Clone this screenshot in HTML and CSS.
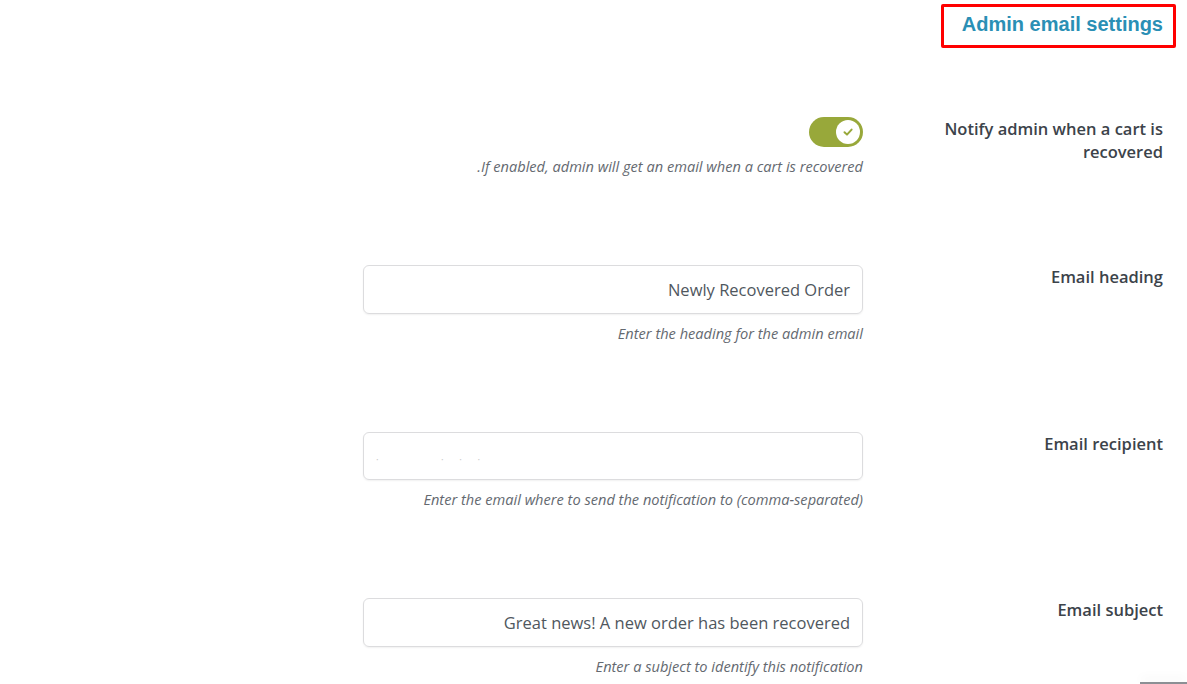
FILE: index.html
```html
<!DOCTYPE html>
<html lang="en">
<head>
  <meta charset="UTF-8">
  <meta name="viewport" content="width=device-width, initial-scale=1.0">
  <title>Admin email settings</title>
  <link rel="stylesheet" href="styles.css">
</head>
<body>
  <header class="head">
    <h2 class="head-title">Admin email settings</h2>
  </header>
  <main class="form">
    <div class="row row-first">
      <label class="label">Notify admin when a cart is recovered</label>
      <div class="field">
        <span class="toggle">
          <span class="knob">
            <svg width="12" height="12" viewBox="0 0 12 12"><path d="M2.5 6.2 L5 8.6 L9.6 3.6" fill="none" stroke="#98a83a" stroke-width="2" stroke-linecap="round" stroke-linejoin="round"/></svg>
          </span>
        </span>
        <p class="desc">.If enabled, admin will get an email when a cart is recovered</p>
      </div>
    </div>
    <div class="row">
      <label class="label">Email heading</label>
      <div class="field">
        <div class="input">Newly Recovered Order</div>
        <p class="desc">Enter the heading for the admin email</p>
      </div>
    </div>
    <div class="row row-short">
      <label class="label">Email recipient</label>
      <div class="field">
        <div class="input input-blur"><span class="dots">&middot; &nbsp;&nbsp;&nbsp;&nbsp;&nbsp;&nbsp;&nbsp;&nbsp;&nbsp;&nbsp;&nbsp;&nbsp;&nbsp;&nbsp;&nbsp;&nbsp;&nbsp;&nbsp;&nbsp;&nbsp;&nbsp;&nbsp; &middot; &nbsp;&nbsp;&nbsp;&nbsp; &middot; &nbsp;&nbsp;&nbsp;&nbsp; &middot;</span></div>
        <p class="desc">Enter the email where to send the notification to (comma-separated)</p>
      </div>
    </div>
    <div class="row row-last">
      <label class="label">Email subject</label>
      <div class="field">
        <div class="input">Great news! A new order has been recovered</div>
        <p class="desc">Enter a subject to identify this notification</p>
      </div>
    </div>
  </main>
  <div class="corner"></div>
</body>
</html>
```

FILE: styles.css
```css
body,
header,
main,
div,
h2,
p,
label,
span {
  margin: 0;
  border: 0;
  padding: 0;
}

html {
  overflow: hidden;
}

body {
  font-family: "Open Sans", "Noto Sans", sans-serif;
  background: #fff;
  color: #3c434a;
}

.head {
  display: flex;
  justify-content: flex-end;
  padding: 4px 11px 0 0;
}
.head-title {
  box-sizing: border-box;
  width: 235px;
  height: 44px;
  border: 3px solid #f00;
  border-radius: 2px;
  padding-right: 10px;
  text-align: right;
  font-family: "Liberation Sans", Arial, sans-serif;
  font-size: 20px;
  font-weight: bold;
  line-height: 34px;
  color: #2a8fb5;
}

.form {
  padding-right: 24px;
  margin-top: 69px;
}
.row {
  display: flex;
  flex-direction: row-reverse;
  align-items: flex-start;
  gap: 80px;
  height: 167px;
}
.row-first {
  height: 148px;
}
.row-short {
  height: 166px;
}
.row-last {
  height: auto;
}
.label {
  width: 220px;
  text-align: right;
  font-size: 16.5px;
  font-weight: 600;
  line-height: 23px;
  color: #3c434a;
}
.field {
  width: 500px;
  display: flex;
  flex-direction: column;
  align-items: flex-end;
}

.toggle {
  display: flex;
  justify-content: flex-end;
  align-items: center;
  width: 54px;
  height: 30px;
  border-radius: 15px;
  background: #98a83a;
  padding-right: 3px;
  box-sizing: border-box;
}
.knob {
  display: flex;
  align-items: center;
  justify-content: center;
  width: 24px;
  height: 24px;
  border-radius: 50%;
  background: #fff;
}

.input {
  box-sizing: border-box;
  width: 500px;
  height: 49px;
  border: 1px solid #dcdcde;
  border-radius: 6px;
  box-shadow: 0 1px 2px rgba(0, 0, 0, .06);
  padding: 0 12px;
  text-align: right;
  font-size: 16.5px;
  line-height: 47px;
  color: #50575e;
}
.input-blur {
  text-align: left;
  height: 48px;
}
.dots {
  font-size: 10px;
  color: #ccc;
}

.desc {
  margin-top: 9px;
  font-size: 14.6px;
  font-style: italic;
  line-height: 20px;
  color: #646970;
  text-align: right;
}

.corner {
  position: absolute;
  right: 0;
  top: 682px;
  width: 47px;
  height: 2px;
  background: #8c8f94;
  box-shadow: 0 -4px 10px rgba(0, 0, 0, .08);
}
```
